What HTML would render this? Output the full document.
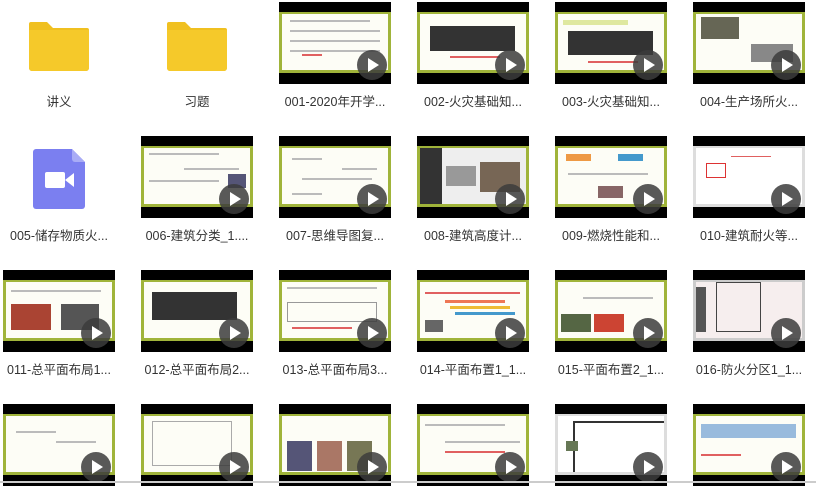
<!DOCTYPE html>
<html><head><meta charset="utf-8"><style>
*{margin:0;padding:0;box-sizing:border-box}
body{width:816px;height:483px;overflow:hidden;background:#fff;position:relative;font-family:"Liberation Sans","Noto Sans CJK SC",sans-serif}
.it{position:absolute;width:112px}
.th{position:absolute;left:0;top:0;width:112px;height:82px;background:#000;overflow:hidden}
.sc{position:absolute;left:0;top:10px;width:112px;height:61px;background:#fdfdf6;border:3px solid #a0b43a;border-top-width:2px;overflow:hidden}
.pl{position:absolute;left:78px;top:48px;width:30px;height:30px;border-radius:50%;background:rgba(60,60,60,.85)}
.pl:after{content:"";position:absolute;left:11px;top:8px;border-left:11px solid #fff;border-top:7px solid transparent;border-bottom:7px solid transparent}
.lb{position:absolute;left:-13px;width:138px;text-align:center;font-size:12.5px;color:#333;top:89px;white-space:nowrap}
.l{position:absolute;height:2px;background:#bbb}
.r{position:absolute;height:2px;background:#e06060}
.b{position:absolute;background:#333}
</style></head><body>
<!-- row1 -->
<div class="it" style="left:3px;top:2px">
<svg style="position:absolute;left:26px;top:18px" width="60" height="52"><path d="M2 2h16l6 6h34a2 2 0 0 1 2 2v38a3 3 0 0 1-3 3H3a3 3 0 0 1-3-3V4a2 2 0 0 1 2-2z" fill="#f0c020"/><path d="M0 10h60v38a3 3 0 0 1-3 3H3a3 3 0 0 1-3-3z" fill="#f5c92a"/></svg>
<div class="lb">讲义</div></div>
<div class="it" style="left:141px;top:2px">
<svg style="position:absolute;left:26px;top:18px" width="60" height="52"><path d="M2 2h16l6 6h34a2 2 0 0 1 2 2v38a3 3 0 0 1-3 3H3a3 3 0 0 1-3-3V4a2 2 0 0 1 2-2z" fill="#f0c020"/><path d="M0 10h60v38a3 3 0 0 1-3 3H3a3 3 0 0 1-3-3z" fill="#f5c92a"/></svg>
<div class="lb">习题</div></div>

<div class="it" style="left:279px;top:2px"><div class="th"><div class="sc"><div class="l" style="left:8px;top:6px;width:80px"></div><div class="l" style="left:8px;top:16px;width:90px"></div><div class="l" style="left:8px;top:26px;width:90px"></div><div class="l" style="left:8px;top:36px;width:90px"></div><div class="r" style="left:20px;top:40px;width:20px"></div></div><div class="pl"></div></div><div class="lb">001-2020年开学...</div></div>
<div class="it" style="left:417px;top:2px"><div class="th"><div class="sc"><div class="b" style="left:10px;top:12px;width:85px;height:25px"></div><div class="r" style="left:30px;top:42px;width:50px"></div></div><div class="pl"></div></div><div class="lb">002-火灾基础知...</div></div>
<div class="it" style="left:555px;top:2px"><div class="th"><div class="sc"><div style="position:absolute;left:5px;top:6px;width:65px;height:5px;background:#dfe8a0"></div><div class="b" style="left:10px;top:17px;width:85px;height:24px"></div><div class="r" style="left:30px;top:47px;width:50px"></div></div><div class="pl"></div></div><div class="lb">003-火灾基础知...</div></div>
<div class="it" style="left:693px;top:2px"><div class="th"><div class="sc"><div class="b" style="left:5px;top:3px;width:38px;height:22px;background:#665"></div><div class="b" style="left:55px;top:30px;width:42px;height:18px;background:#888"></div></div><div class="pl"></div></div><div class="lb">004-生产场所火...</div></div>
<!-- row2 -->
<div class="it" style="left:3px;top:136px">
<svg style="position:absolute;left:30px;top:13px" width="52" height="60"><path d="M3 0h36l13 13v44a3 3 0 0 1-3 3H3a3 3 0 0 1-3-3V3a3 3 0 0 1 3-3z" fill="#7b7ff0"/><path d="M39 0l13 13H42a3 3 0 0 1-3-3z" fill="#a9acf6"/><rect x="12" y="23" width="20" height="16" rx="2" fill="#fff"/><path d="M32 31l9-7v14z" fill="#fff"/></svg>
<div class="lb">005-储存物质火...</div></div>
<div class="it" style="left:141px;top:136px"><div class="th"><div class="sc"><div class="l" style="left:5px;top:5px;width:70px"></div><div class="l" style="left:40px;top:20px;width:55px"></div><div class="l" style="left:5px;top:32px;width:70px"></div><div class="b" style="left:84px;top:26px;width:18px;height:14px;background:#557"></div></div><div class="pl"></div></div><div class="lb">006-建筑分类_1....</div></div>
<div class="it" style="left:279px;top:136px"><div class="th"><div class="sc"><div class="l" style="left:10px;top:10px;width:30px"></div><div class="l" style="left:60px;top:20px;width:35px"></div><div class="l" style="left:20px;top:30px;width:70px"></div><div class="l" style="left:10px;top:45px;width:30px"></div></div><div class="pl"></div></div><div class="lb">007-思维导图复...</div></div>
<div class="it" style="left:417px;top:136px"><div class="th"><div class="sc" style="background:#eee"><div class="b" style="left:0;top:0;width:22px;height:60px;background:#333"></div><div class="b" style="left:26px;top:18px;width:30px;height:20px;background:#999"></div><div class="b" style="left:60px;top:14px;width:40px;height:30px;background:#765"></div></div><div class="pl"></div></div><div class="lb">008-建筑高度计...</div></div>
<div class="it" style="left:555px;top:136px"><div class="th"><div class="sc"><div style="position:absolute;left:8px;top:6px;width:25px;height:7px;background:#e94"></div><div style="position:absolute;left:60px;top:6px;width:25px;height:7px;background:#49c"></div><div class="l" style="left:10px;top:25px;width:80px"></div><div class="b" style="left:40px;top:38px;width:25px;height:12px;background:#866"></div></div><div class="pl"></div></div><div class="lb">009-燃烧性能和...</div></div>
<div class="it" style="left:693px;top:136px"><div class="th"><div class="sc" style="background:#fff;border-color:#ddd"><div class="r" style="left:10px;top:15px;width:20px;height:15px;background:none;border:1px solid #d33"></div><div class="r" style="left:35px;top:8px;width:40px;height:1px"></div></div><div class="pl"></div></div><div class="lb">010-建筑耐火等...</div></div>
<!-- row3 -->
<div class="it" style="left:3px;top:270px"><div class="th"><div class="sc"><div class="b" style="left:5px;top:22px;width:40px;height:26px;background:#a43"></div><div class="b" style="left:55px;top:22px;width:38px;height:26px;background:#555"></div><div class="l" style="left:5px;top:8px;width:90px"></div></div><div class="pl"></div></div><div class="lb">011-总平面布局1...</div></div>
<div class="it" style="left:141px;top:270px"><div class="th"><div class="sc"><div class="b" style="left:8px;top:10px;width:85px;height:28px"></div></div><div class="pl"></div></div><div class="lb">012-总平面布局2...</div></div>
<div class="it" style="left:279px;top:270px"><div class="th"><div class="sc"><div class="l" style="left:5px;top:5px;width:90px"></div><div class="l" style="left:5px;top:20px;width:90px;height:20px;background:none;border:1px solid #999"></div><div class="r" style="left:10px;top:45px;width:60px"></div></div><div class="pl"></div></div><div class="lb">013-总平面布局3...</div></div>
<div class="it" style="left:417px;top:270px"><div class="th"><div class="sc"><div class="r" style="left:5px;top:10px;width:95px"></div><div style="position:absolute;left:25px;top:18px;width:60px;height:3px;background:#e75"></div><div style="position:absolute;left:30px;top:24px;width:60px;height:3px;background:#eb3"></div><div style="position:absolute;left:35px;top:30px;width:60px;height:3px;background:#49c"></div><div class="b" style="left:5px;top:38px;width:18px;height:12px;background:#666"></div></div><div class="pl"></div></div><div class="lb">014-平面布置1_1...</div></div>
<div class="it" style="left:555px;top:270px"><div class="th"><div class="sc"><div class="l" style="left:25px;top:15px;width:70px"></div><div class="b" style="left:3px;top:32px;width:30px;height:18px;background:#564"></div><div class="b" style="left:36px;top:32px;width:30px;height:18px;background:#c43"></div></div><div class="pl"></div></div><div class="lb">015-平面布置2_1...</div></div>
<div class="it" style="left:693px;top:270px"><div class="th"><div class="sc" style="background:#f6eeee;border-color:#ccc"><div class="b" style="left:0;top:5px;width:10px;height:45px;background:#555"></div><div style="position:absolute;left:20px;top:0;width:45px;height:50px;border:1px solid #444"></div></div><div class="pl"></div></div><div class="lb">016-防火分区1_1...</div></div>
<!-- row4 -->
<div class="it" style="left:3px;top:404px"><div class="th"><div class="sc"><div class="l" style="left:10px;top:15px;width:40px"></div><div class="l" style="left:50px;top:25px;width:40px"></div></div><div class="pl"></div></div></div>
<div class="it" style="left:141px;top:404px"><div class="th"><div class="sc"><div style="position:absolute;left:8px;top:5px;width:80px;height:45px;border:1px solid #aaa"></div></div><div class="pl"></div></div></div>
<div class="it" style="left:279px;top:404px"><div class="th"><div class="sc"><div class="b" style="left:5px;top:25px;width:25px;height:30px;background:#557"></div><div class="b" style="left:35px;top:25px;width:25px;height:30px;background:#a76"></div><div class="b" style="left:65px;top:25px;width:25px;height:30px;background:#775"></div></div><div class="pl"></div></div></div>
<div class="it" style="left:417px;top:404px"><div class="th"><div class="sc"><div class="l" style="left:5px;top:8px;width:80px"></div><div class="l" style="left:25px;top:25px;width:75px"></div><div class="r" style="left:25px;top:35px;width:60px"></div></div><div class="pl"></div></div></div>
<div class="it" style="left:555px;top:404px"><div class="th"><div class="sc" style="border-color:#ddd;background:#fff"><div style="position:absolute;left:15px;top:5px;width:95px;height:55px;border:2px solid #333"></div><div class="b" style="left:8px;top:25px;width:12px;height:10px;background:#675"></div></div><div class="pl"></div></div></div>
<div class="it" style="left:693px;top:404px"><div class="th"><div class="sc"><div style="position:absolute;left:5px;top:8px;width:95px;height:14px;background:#9bd"></div><div class="r" style="left:5px;top:38px;width:40px"></div></div><div class="pl"></div></div></div>
<div style="position:absolute;left:0;top:481px;width:816px;height:2px;background:#ccc"></div>
</body></html>
